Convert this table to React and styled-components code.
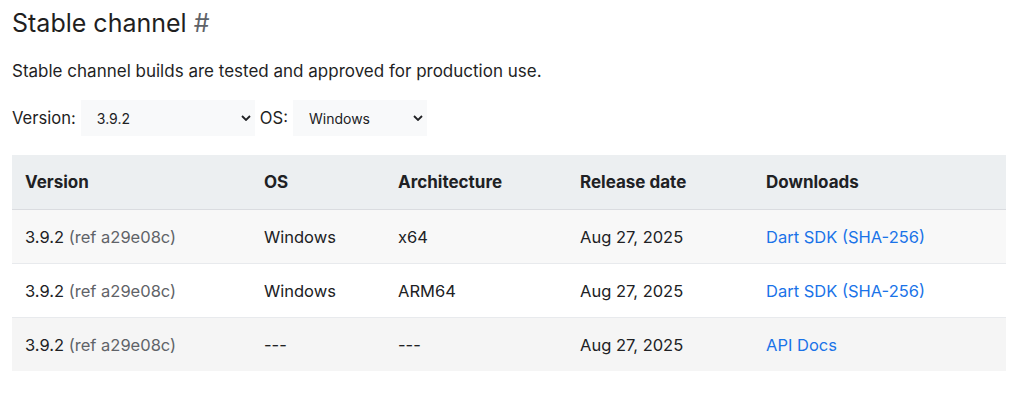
import React, { useState } from "react";
import styled, { createGlobalStyle } from "styled-components";

const GlobalStyle = createGlobalStyle`
  body {
    margin: 0;
    background: #fff;
    font-family: Inter, "Noto Sans", sans-serif;
    color: #1f1f1f;
  }
`;

const rows = [
  { os: "Windows", arch: "x64", date: "Aug 27, 2025", link: "Dart SDK (SHA-256)" },
  { os: "Windows", arch: "ARM64", date: "Aug 27, 2025", link: "Dart SDK (SHA-256)" },
  { os: "---", arch: "---", date: "Aug 27, 2025", link: "API Docs" },
];

const columns = [
  { label: "Version", width: 239 },
  { label: "OS", width: 134 },
  { label: "Architecture", width: 182 },
  { label: "Release date", width: 186 },
  { label: "Downloads", width: 253 },
];

function App() {
  const [version, setVersion] = useState("3.9.2");
  const [os, setOs] = useState("Windows");

  return (
    <Page>
      <GlobalStyle />
      <Title>
        Stable channel <Hash href="#stable">#</Hash>
      </Title>
      <Lead>Stable channel builds are tested and approved for production use.</Lead>
      <Filters>
        <Label>Version:</Label>
        <Select width={174} value={version} onChange={(e) => setVersion(e.target.value)}>
          <option>3.9.2</option>
          <option>3.9.1</option>
        </Select>
        <Label>OS:</Label>
        <Select width={134} value={os} onChange={(e) => setOs(e.target.value)}>
          <option>Windows</option>
          <option>macOS</option>
          <option>Linux</option>
        </Select>
      </Filters>
      <Table>
        <colgroup>
          {columns.map((c) => (
            <col key={c.label} style={{ width: c.width }} />
          ))}
        </colgroup>
        <thead>
          <tr>
            {columns.map((c) => (
              <Th key={c.label}>{c.label}</Th>
            ))}
          </tr>
        </thead>
        <tbody>
          {rows.map((r, i) => (
            <Row key={i} shade={i === 0 ? "#f8f8f8" : i === 2 ? "#f5f5f5" : "#fff"}>
              <Td>
                3.9.2 <Ref>(ref a29e08c)</Ref>
              </Td>
              <Td>{r.os}</Td>
              <Td>{r.arch}</Td>
              <Td>{r.date}</Td>
              <Td>
                <Link href="#">{r.link}</Link>
              </Td>
            </Row>
          ))}
        </tbody>
      </Table>
    </Page>
  );
}

const Page = styled.div`
  padding: 7px 18px 0 12px;
`;

const Title = styled.h2`
  margin: 0;
  font-size: 25px;
  font-weight: 400;
  line-height: 32px;
  color: #1f1f1f;
`;

const Hash = styled.a`
  color: #5f6368;
  text-decoration: none;
`;

const Lead = styled.p`
  margin: 20px 0 0;
  font-size: 17px;
  line-height: 24px;
`;

const Filters = styled.div`
  display: flex;
  align-items: center;
  gap: 5px;
  margin-top: 17px;
`;

const Label = styled.span`
  font-size: 16.6px;
  color: #1f1f1f;
`;

const Select = styled.select`
  appearance: none;
  width: ${(p) => p.width}px;
  height: 36px;
  border: none;
  background-color: #f8f9fa;
  background-image: url("data:image/svg+xml,%3Csvg xmlns='http://www.w3.org/2000/svg' width='10' height='6' viewBox='0 0 10 6'%3E%3Cpath d='M1 1l4 4 4-4' fill='none' stroke='%23202124' stroke-width='1.8'/%3E%3C/svg%3E");
  background-repeat: no-repeat;
  background-position: right 4px center;
  padding: 0 24px 0 16px;
  font-family: Inter, sans-serif;
  font-size: 14px;
  color: #202124;
  outline: none;
`;

const Table = styled.table`
  margin-top: 19px;
  width: 994px;
  table-layout: fixed;
  border-collapse: collapse;
  font-size: 16.5px;
`;

const Th = styled.th`
  background: #eceff1;
  text-align: left;
  font-size: 17px;
  font-weight: 700;
  height: 54px;
  padding: 0 13px;
  color: #202124;
  border-bottom: 1px solid #dadce0;
`;

const Row = styled.tr`
  background: ${(p) => p.shade};
  border-bottom: 1px solid #e8eaed;
  &:last-child {
    border-bottom: none;
  }
`;

const Td = styled.td`
  height: 53px;
  padding: 0 13px;
  color: #202124;
  white-space: nowrap;
`;

const Ref = styled.span`
  color: #5f6368;
`;

const Link = styled.a`
  color: #1a73e8;
  text-decoration: none;
`;

export default App;
